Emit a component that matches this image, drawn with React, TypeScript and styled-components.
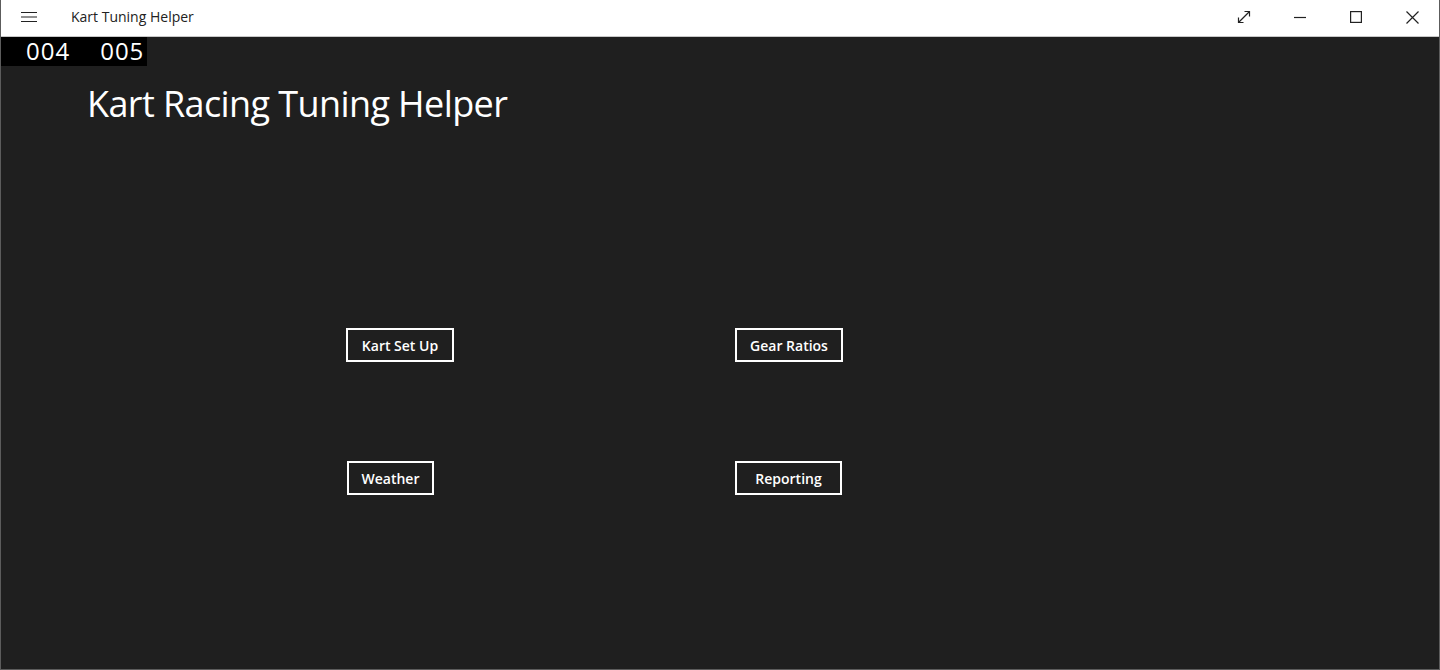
import React from "react";
import styled, { createGlobalStyle } from "styled-components";

const GlobalStyle = createGlobalStyle`
  html, body {
    margin: 0;
    padding: 0;
    background: #1f1f1f;
  }
  body {
    font-family: "Open Sans", "Noto Sans", sans-serif;
  }
`;

const menuItems = [
  { label: "Kart Set Up", width: 108, offset: 0 },
  { label: "Gear Ratios", width: 108, offset: 0 },
  { label: "Weather", width: 87, offset: 1 },
  { label: "Reporting", width: 107, offset: 0 },
];

function App() {
  return (
    <>
      <GlobalStyle />
      <StyledWindow>
        <StyledTitleBar>
          <StyledTitleLeft>
            <StyledIconButton aria-label="Menu">
              <svg width="16" height="12" viewBox="0 0 16 12">
                <path d="M0 1.5h16M0 6h16M0 10.5h16" stroke="#222" strokeWidth="1.2" />
              </svg>
            </StyledIconButton>
            <StyledAppName>Kart Tuning Helper</StyledAppName>
          </StyledTitleLeft>
          <StyledCaptionButtons>
            <StyledCaptionButton aria-label="Full screen">
              <svg width="14" height="14" viewBox="0 0 14 14">
                <path d="M1.5 12.5L12.5 1.5" stroke="#222" strokeWidth="1.2" />
                <path d="M7.5 1.5h5v5M1.5 7.5v5h5" stroke="#222" strokeWidth="1.2" fill="none" />
              </svg>
            </StyledCaptionButton>
            <StyledCaptionButton aria-label="Minimize">
              <svg width="12" height="12" viewBox="0 0 12 12">
                <path d="M0 6.5h12" stroke="#222" strokeWidth="1.2" />
              </svg>
            </StyledCaptionButton>
            <StyledCaptionButton aria-label="Maximize">
              <svg width="12" height="12" viewBox="0 0 12 12">
                <rect x="0.6" y="0.6" width="10.8" height="10.8" stroke="#222" strokeWidth="1.2" fill="none" />
              </svg>
            </StyledCaptionButton>
            <StyledCaptionButton aria-label="Close">
              <svg width="13" height="13" viewBox="0 0 13 13">
                <path d="M0.5 0.5l12 12M12.5 0.5l-12 12" stroke="#222" strokeWidth="1.2" />
              </svg>
            </StyledCaptionButton>
          </StyledCaptionButtons>
        </StyledTitleBar>

        <StyledContent>
          <StyledCounter>
            <span>004</span>
            <span>005</span>
          </StyledCounter>
          <StyledHeading>Kart Racing Tuning Helper</StyledHeading>
          <StyledMenuGrid>
            {menuItems.map((item) => (
              <StyledMenuButton key={item.label} $width={item.width} $offset={item.offset}>
                {item.label}
              </StyledMenuButton>
            ))}
          </StyledMenuGrid>
        </StyledContent>
      </StyledWindow>
    </>
  );
}

export default App;

const StyledWindow = styled.div`
  width: 1440px;
  height: 670px;
  box-sizing: border-box;
  display: flex;
  flex-direction: column;
  border: 1px solid #5c5c5c;
  border-top: none;
  overflow: hidden;
`;

const StyledTitleBar = styled.div`
  height: 36px;
  flex-shrink: 0;
  background: #fff;
  border-bottom: 1px solid #c8c8c8;
  display: flex;
  justify-content: space-between;
  align-items: center;
`;

const StyledTitleLeft = styled.div`
  display: flex;
  align-items: center;
`;

const StyledIconButton = styled.div`
  width: 54px;
  height: 36px;
  display: flex;
  align-items: center;
  justify-content: center;
  padding: 0 0 3px 1px;
  box-sizing: border-box;
`;

const StyledAppName = styled.span`
  margin: -3px 0 0 16px;
  font-family: "Open Sans", "Noto Sans", sans-serif;
  font-size: 14px;
  color: #222;
`;

const StyledCaptionButtons = styled.div`
  display: flex;
  margin-right: -1px;
  padding-bottom: 2px;
`;

const StyledCaptionButton = styled.div`
  width: 56px;
  height: 34px;
  display: flex;
  align-items: center;
  justify-content: center;
`;

const StyledContent = styled.div`
  flex: 1;
  background: #1f1f1f;
  display: flex;
  flex-direction: column;
  align-items: flex-start;
`;

const StyledCounter = styled.div`
  background: #000;
  width: 147px;
  height: 29px;
  box-sizing: border-box;
  padding: 0 0 2px 26px;
  display: flex;
  gap: 30px;
  align-items: center;
  margin-left: -1px;
  font-family: "Open Sans", sans-serif;
  font-size: 24px;
  font-weight: 500;
  letter-spacing: 1px;
  color: #fff;
  line-height: 1;
`;

const StyledHeading = styled.h1`
  margin: 14px 0 0 86px;
  font-family: "Open Sans", sans-serif;
  font-weight: 400;
  font-size: 36px;
  line-height: 48px;
  color: #fff;
  letter-spacing: -0.6px;
`;

const StyledMenuGrid = styled.div`
  margin: 200px 0 0 345px;
  display: grid;
  grid-template-columns: 389px auto;
  row-gap: 99px;
  justify-items: start;
`;

const StyledMenuButton = styled.button<{ $width: number; $offset: number }>`
  width: ${(p) => p.$width}px;
  margin-left: ${(p) => p.$offset}px;
  height: 34px;
  box-sizing: border-box;
  padding: 0;
  background: transparent;
  border: 2px solid #fff;
  color: #fff;
  font-family: "Open Sans", sans-serif;
  font-weight: 600;
  font-size: 14px;
  cursor: pointer;
`;
